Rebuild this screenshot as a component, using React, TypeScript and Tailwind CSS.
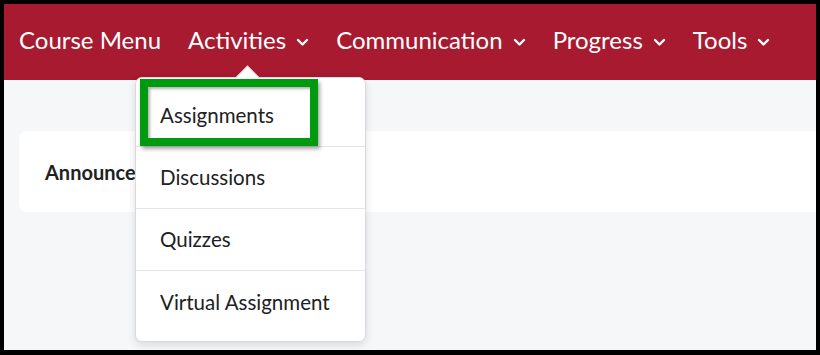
import React from 'react';

const navItems = [
  { label: 'Course Menu', caret: false },
  { label: 'Activities', caret: true },
  { label: 'Communication', caret: true },
  { label: 'Progress', caret: true },
  { label: 'Tools', caret: true },
];

const menuItems = ['Assignments', 'Discussions', 'Quizzes', 'Virtual Assignment'];

function Caret() {
  return (
    <svg width="13" height="9" viewBox="0 0 13 9" className="ml-[10px] mt-[4px]">
      <path d="M2 2 L6.5 6.5 L11 2" fill="none" stroke="white" strokeWidth="2.4" strokeLinecap="round" strokeLinejoin="round" />
    </svg>
  );
}

export default function App() {
  return (
    <div className="w-[820px] h-[355px] bg-black pt-[4px] pl-[4px] pr-[4px] pb-[5px]" style={{ fontFamily: 'Lato, "Open Sans", sans-serif' }}>
      <div className="relative h-full w-full overflow-hidden bg-[#f6f7f9]">
        {/* top nav */}
        <div className="h-[76px] bg-[#a71a2f] flex items-center pl-[15px] pb-[4px] gap-[27px] text-white text-[24px]">
          {navItems.map((n) => (
            <div key={n.label} className="flex items-center">
              <span>{n.label}</span>
              {n.caret && <Caret />}
            </div>
          ))}
        </div>

        {/* announcements card */}
        <div className="mt-[51px] ml-[15px] h-[81px] bg-white rounded-l-[8px] flex items-center pl-[26px]">
          <span className="text-[20px] font-bold text-[#202122]">Announcements</span>
        </div>

        {/* dropdown */}
        <div className="absolute left-[131px] top-[73px] w-[231px] bg-white border border-[#d6dae0] rounded-[7px] shadow-[0_3px_8px_rgba(0,0,0,0.12)] pt-[7px] pb-[8px]">
          <div className="absolute left-[103px] top-[-9px] w-[17px] h-[17px] rotate-45 bg-white border-l border-t border-[#d6dae0]" />
          {menuItems.map((m, i) => (
            <div
              key={m}
              className={
                'relative h-[62px] flex items-center pl-[24px] text-[20.5px] text-[#202122] ' +
                (i < menuItems.length - 1 ? 'border-b border-[#e3e6eb]' : '')
              }
            >
              {m}
            </div>
          ))}
          {/* highlight */}
          <div className="absolute left-[4px] top-[1px] w-[178px] h-[67px] border-[8px] border-[#009a0e] shadow-[2px_3px_4px_rgba(0,0,0,0.35),inset_2px_2px_3px_rgba(0,0,0,0.3)]" />
        </div>
      </div>
    </div>
  );
}
